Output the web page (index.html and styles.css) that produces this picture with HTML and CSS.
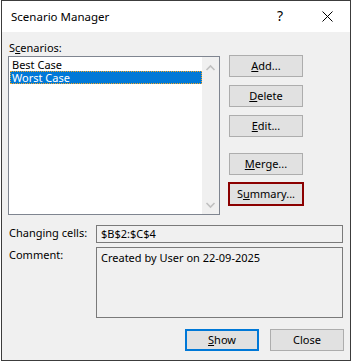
FILE: index.html
```html
<!DOCTYPE html>
<html>
<head>
<meta charset="utf-8">
<link rel="stylesheet" href="styles.css">
</head>
<body>
<div class="dialog">
  <div class="titlebar">
    <span class="title">Scenario Manager</span>
    <span class="help">?</span>
    <svg class="close-x" width="11" height="11" viewBox="0 0 11 11"><path d="M0.5 0.5 L10.5 10.5 M10.5 0.5 L0.5 10.5" stroke="#000" stroke-width="1" fill="none"/></svg>
  </div>
  <div class="content">
    <div class="label scen-label">S<u>c</u>enarios:</div>
    <div class="main-row">
      <div class="listbox">
        <div class="items">
          <div class="item">Best Case</div>
          <div class="item selected">Worst Case</div>
        </div>
        <div class="scrollbar">
          <svg width="17" height="10" viewBox="0 0 17 10"><path d="M4.5 7 L8.5 3 L12.5 7" stroke="#c0c0c0" stroke-width="1.6" fill="none"/></svg>
          <svg width="17" height="10" viewBox="0 0 17 10"><path d="M4.5 3 L8.5 7 L12.5 3" stroke="#c0c0c0" stroke-width="1.6" fill="none"/></svg>
        </div>
      </div>
      <div class="side-buttons">
        <button class="btn"><u>A</u>dd...</button>
        <button class="btn"><u>D</u>elete</button>
        <button class="btn"><u>E</u>dit...</button>
        <button class="btn gap-big"><u>M</u>erge...</button>
        <button class="btn summary">S<u>u</u>mmary...</button>
      </div>
    </div>
    <div class="field-row cells-row">
      <div class="label field-label">Changing cells:</div>
      <div class="field cells">$B$2:$C$4</div>
    </div>
    <div class="field-row">
      <div class="label field-label">Comment:</div>
      <div class="field comment">Created by User on 22-09-2025</div>
    </div>
    <div class="bottom-row">
      <button class="btn show"><u>S</u>how</button>
      <button class="btn">Close</button>
    </div>
  </div>
</div>
</body>
</html>
```
FILE: styles.css
```css
* { box-sizing: border-box; }
html, body { margin: 0; padding: 0; background: #ffffff; }
body {
  font-family: "Noto Sans", "Segoe UI", "Liberation Sans", sans-serif;
  font-size: 11px;
  color: #000;
}
.dialog {
  margin-left: 1px;
  width: 350px;
  height: 361px;
  border: 1px solid #3c3c3c;
  display: flex;
  flex-direction: column;
  background: #f0f0f0;
}
.titlebar {
  height: 31px;
  background: #fff;
  display: flex;
  align-items: center;
  padding-left: 9px;
}
.title { flex: 1; font-size: 11.5px; margin-top: -1px; }
.help { font-size: 14px; width: 10px; margin-right: 35px; margin-top: -2px; }
.close-x { margin-right: 17px; }
.content {
  flex: 1;
  padding: 8px 6px 0 6px;
  display: flex;
  flex-direction: column;
}
.label { line-height: 15px; }
.scen-label { padding-left: 1px; }
.main-row {
  display: flex;
  margin-top: 1px;
}
.listbox {
  width: 212px;
  height: 159px;
  border: 1px solid #7f8590;
  background: #fff;
  display: flex;
}
.items {
  flex: 1;
  padding: 1px 0 0 1px;
}
.item {
  height: 13px;
  line-height: 13px;
  padding-left: 2px;
  overflow: hidden;
}
.item.selected {
  background: #0078d7;
  color: #fff;
  outline: 1px dotted #f5a623;
  outline-offset: -1px;
}
.scrollbar {
  width: 17px;
  background: #f0f0f0;
  display: flex;
  flex-direction: column;
  justify-content: space-between;
  padding: 6px 0 4px 0;
}
.scrollbar svg { display: block; }
.side-buttons {
  margin-left: 9px;
  display: flex;
  flex-direction: column;
  margin-top: -1px;
}
.btn {
  font-family: inherit;
  font-size: 11px;
  width: 74px;
  height: 22px;
  background: #e1e1e1;
  border: 1px solid #adadad;
  padding: 0;
  margin: 0 0 8px 0;
  color: #000;
  line-height: 18px;
}
.btn.gap-big { margin-top: 8px; }
.btn.summary {
  border: 2px solid #8b0000;
  width: 76px;
  height: 24px;
  margin-left: -1px;
  margin-top: -1px;
}
.field-row {
  display: flex;
  margin-top: 4px;
}
.field-row.cells-row { margin-top: 10px; }
.field-label { width: 88px; padding-left: 1px; }
.field {
  width: 247px;
  border: 1px solid #7a7a7a;
  background: #f0f0f0;
  padding-left: 4px;
}
.cells {
  height: 18px;
  line-height: 16px;
}
.comment {
  height: 71px;
  padding-top: 2px;
  line-height: 16px;
}
.bottom-row {
  display: flex;
  justify-content: flex-end;
  margin-top: 11px;
}
.bottom-row .btn { margin: 0 0 0 11px; }
.btn.show { border: 2px solid #0078d7; }
```
